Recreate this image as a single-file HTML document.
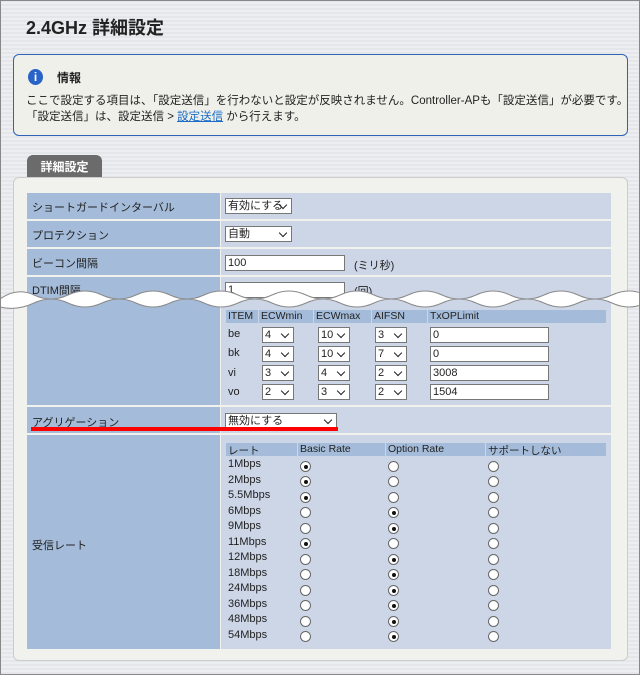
<!DOCTYPE html>
<html><head><meta charset="utf-8"><style>
*{margin:0;padding:0;box-sizing:border-box}
body{width:640px;height:675px;position:relative;overflow:hidden;background:repeating-linear-gradient(180deg,#e4e6ea 0,#e4e6ea 2px,#eceef1 2px,#eceef1 4px);font-family:"Liberation Sans","Noto Sans CJK JP",sans-serif;color:#222;font-size:11px}
.a{position:absolute}
.frame{left:0;top:0;width:640px;height:675px;border:1px solid #888}
.sel{position:absolute;background:#fff;border:1px solid #777;height:16px;font-size:11px;line-height:14px;padding-left:2px}
.sel::after{content:"";position:absolute;right:5px;top:3px;width:5px;height:5px;border-right:1.5px solid #222;border-bottom:1.5px solid #222;transform:rotate(45deg)}
.inp{position:absolute;background:#fff;border:1px solid #777;height:16px;font-size:11px;line-height:14px;padding-left:2px}
.L{position:absolute;background:#a4bcd9;left:27px;width:193px}
.R{position:absolute;background:#cdd6e7;left:221px;width:390px}
.lt{position:absolute;font-size:11px}
.hd{position:absolute;background:#a4bcd9;height:13px}
.rd{position:absolute;width:11px;height:11px;border-radius:50%;background:#fff;border:1px solid #666}
.rd.on::after{content:"";position:absolute;left:2.5px;top:2.5px;width:4px;height:4px;border-radius:50%;background:#111}
</style></head><body>
<div class="a" style="left:26px;top:14px;font-size:18px;font-weight:bold;color:#222">2.4GHz 詳細設定</div>
<div class="a" style="left:13px;top:54px;width:615px;height:82px;border:1.5px solid #2e63b5;border-radius:6px;background:#f0f0ea"></div>
<div class="a" style="left:28px;top:69px;width:15px;height:16px;border-radius:50%;background:#2a63c6;color:#fff;font-weight:bold;font-size:12px;text-align:center;line-height:16px">i</div>
<div class="a" style="left:57px;top:69px;font-size:12px;font-weight:bold">情報</div>
<div class="a" style="left:26px;top:92px;font-size:11.5px;white-space:nowrap">ここで設定する項目は、「設定送信」を行わないと設定が反映されません。Controller-APも「設定送信」が必要です。</div>
<div class="a" style="left:26px;top:108px;font-size:11.5px;white-space:nowrap">「設定送信」は、設定送信 &gt; <span style="color:#1b6cc2;text-decoration:underline">設定送信</span> から行えます。</div>
<div class="a" style="left:27px;top:155px;width:75px;height:24px;background:#6b6b6b;border-radius:6px 6px 0 0;color:#fff;font-weight:bold;font-size:12px;text-align:center;line-height:24px">詳細設定</div>
<div class="a" style="left:13px;top:177px;width:615px;height:484px;background:#f1f1ed;border:1px solid #ccc;border-radius:6px"></div>

<div class="L" style="top:193px;height:26px"></div><div class="R" style="top:193px;height:26px"></div>
<div class="L" style="top:221px;height:26px"></div><div class="R" style="top:221px;height:26px"></div>
<div class="L" style="top:249px;height:26px"></div><div class="R" style="top:249px;height:26px"></div>
<div class="L" style="top:277px;height:128px"></div><div class="R" style="top:277px;height:128px"></div>
<div class="L" style="top:407px;height:26px"></div><div class="R" style="top:407px;height:26px"></div>
<div class="L" style="top:435px;height:214px"></div><div class="R" style="top:435px;height:214px"></div>

<div class="lt" style="left:32px;top:199px">ショートガードインターバル</div>
<div class="lt" style="left:32px;top:227px">プロテクション</div>
<div class="lt" style="left:32px;top:255px">ビーコン間隔</div>
<div class="lt" style="left:32px;top:282px">DTIM間隔</div>
<div class="lt" style="left:32px;top:414px">アグリゲーション</div>
<div class="lt" style="left:32px;top:537px">受信レート</div>

<div class="sel" style="left:225px;top:198px;width:67px">有効にする</div>
<div class="sel" style="left:225px;top:226px;width:67px">自動</div>
<div class="inp" style="left:225px;top:255px;width:120px">100</div><div class="lt" style="left:354px;top:257px">(ミリ秒)</div>
<div class="inp" style="left:225px;top:282px;width:120px">1</div><div class="lt" style="left:354px;top:283px">(回)</div>

<svg class="a" style="left:0;top:285px" width="640" height="30" viewBox="0 0 640 30">
<path d="M0,14 Q17,2 34,10 T68,10 T102,10 T136,10 T170,10 T204,10 T238,10 T272,10 T306,10 T340,10 T374,10 T408,10 T442,10 T476,10 T510,10 T544,10 T578,10 T612,10 T646,10 L646,18 Q629,26 612,18 T578,18 T544,18 T510,18 T476,18 T442,18 T408,18 T374,18 T340,18 T306,18 T272,18 T238,18 T204,18 T170,18 T136,18 T102,18 T68,18 T34,18 T0,22 Z" fill="#fff" stroke="#8a8a8a" stroke-width="1"/>
</svg>

<div class="hd" style="left:226px;top:310px;width:32px"></div>
<div class="hd" style="left:259px;top:310px;width:54px"></div>
<div class="hd" style="left:314px;top:310px;width:57px"></div>
<div class="hd" style="left:372px;top:310px;width:55px"></div>
<div class="hd" style="left:428px;top:310px;width:178px"></div>
<div class="lt" style="left:228px;top:310px;font-size:10.5px">ITEM</div>
<div class="lt" style="left:261px;top:310px;font-size:10.5px">ECWmin</div>
<div class="lt" style="left:316px;top:310px;font-size:10.5px">ECWmax</div>
<div class="lt" style="left:374px;top:310px;font-size:10.5px">AIFSN</div>
<div class="lt" style="left:430px;top:310px;font-size:10.5px">TxOPLimit</div>

<div class="lt" style="left:228px;top:328px">be</div>
<div class="sel" style="left:262px;top:327px;width:32px">4</div><div class="sel" style="left:318px;top:327px;width:32px">10</div><div class="sel" style="left:375px;top:327px;width:32px">3</div><div class="inp" style="left:430px;top:327px;width:119px">0</div>
<div class="lt" style="left:228px;top:347px">bk</div>
<div class="sel" style="left:262px;top:346px;width:32px">4</div><div class="sel" style="left:318px;top:346px;width:32px">10</div><div class="sel" style="left:375px;top:346px;width:32px">7</div><div class="inp" style="left:430px;top:346px;width:119px">0</div>
<div class="lt" style="left:228px;top:367px">vi</div>
<div class="sel" style="left:262px;top:365px;width:32px">3</div><div class="sel" style="left:318px;top:365px;width:32px">4</div><div class="sel" style="left:375px;top:365px;width:32px">2</div><div class="inp" style="left:430px;top:365px;width:119px">3008</div>
<div class="lt" style="left:228px;top:386px">vo</div>
<div class="sel" style="left:262px;top:384px;width:32px">2</div><div class="sel" style="left:318px;top:384px;width:32px">3</div><div class="sel" style="left:375px;top:384px;width:32px">2</div><div class="inp" style="left:430px;top:384px;width:119px">1504</div>

<div class="sel" style="left:225px;top:413px;width:112px">無効にする</div>
<div class="a" style="left:31px;top:427px;width:307px;height:4px;background:#f00"></div>

<div class="hd" style="left:226px;top:443px;width:71px"></div>
<div class="hd" style="left:298px;top:443px;width:87px"></div>
<div class="hd" style="left:386px;top:443px;width:99px"></div>
<div class="hd" style="left:486px;top:443px;width:120px"></div>
<div class="lt" style="left:228px;top:443px;font-size:10.5px">レート</div>
<div class="lt" style="left:300px;top:443px;font-size:10.5px">Basic Rate</div>
<div class="lt" style="left:388px;top:443px;font-size:10.5px">Option Rate</div>
<div class="lt" style="left:488px;top:443px;font-size:10.5px">サポートしない</div>

<div id="rates"></div>
<div class="lt" style="left:228px;top:458px">1Mbps</div><div class="rd on" style="left:300px;top:461px"></div><div class="rd" style="left:388px;top:461px"></div><div class="rd" style="left:488px;top:461px"></div>
<div class="lt" style="left:228px;top:474px">2Mbps</div><div class="rd on" style="left:300px;top:476px"></div><div class="rd" style="left:388px;top:476px"></div><div class="rd" style="left:488px;top:476px"></div>
<div class="lt" style="left:228px;top:489px">5.5Mbps</div><div class="rd on" style="left:300px;top:492px"></div><div class="rd" style="left:388px;top:492px"></div><div class="rd" style="left:488px;top:492px"></div>
<div class="lt" style="left:228px;top:505px">6Mbps</div><div class="rd" style="left:300px;top:507px"></div><div class="rd on" style="left:388px;top:507px"></div><div class="rd" style="left:488px;top:507px"></div>
<div class="lt" style="left:228px;top:520px">9Mbps</div><div class="rd" style="left:300px;top:523px"></div><div class="rd on" style="left:388px;top:523px"></div><div class="rd" style="left:488px;top:523px"></div>
<div class="lt" style="left:228px;top:536px">11Mbps</div><div class="rd on" style="left:300px;top:538px"></div><div class="rd" style="left:388px;top:538px"></div><div class="rd" style="left:488px;top:538px"></div>
<div class="lt" style="left:228px;top:551px">12Mbps</div><div class="rd" style="left:300px;top:554px"></div><div class="rd on" style="left:388px;top:554px"></div><div class="rd" style="left:488px;top:554px"></div>
<div class="lt" style="left:228px;top:567px">18Mbps</div><div class="rd" style="left:300px;top:569px"></div><div class="rd on" style="left:388px;top:569px"></div><div class="rd" style="left:488px;top:569px"></div>
<div class="lt" style="left:228px;top:582px">24Mbps</div><div class="rd" style="left:300px;top:585px"></div><div class="rd on" style="left:388px;top:585px"></div><div class="rd" style="left:488px;top:585px"></div>
<div class="lt" style="left:228px;top:598px">36Mbps</div><div class="rd" style="left:300px;top:600px"></div><div class="rd on" style="left:388px;top:600px"></div><div class="rd" style="left:488px;top:600px"></div>
<div class="lt" style="left:228px;top:613px">48Mbps</div><div class="rd" style="left:300px;top:616px"></div><div class="rd on" style="left:388px;top:616px"></div><div class="rd" style="left:488px;top:616px"></div>
<div class="lt" style="left:228px;top:629px">54Mbps</div><div class="rd" style="left:300px;top:631px"></div><div class="rd on" style="left:388px;top:631px"></div><div class="rd" style="left:488px;top:631px"></div>

<div class="a frame"></div>
</body></html>
